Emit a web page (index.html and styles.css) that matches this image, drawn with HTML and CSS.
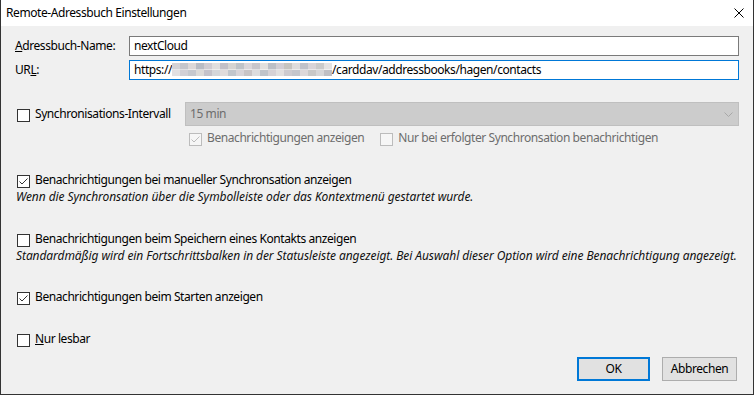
FILE: index.html
```html
<!DOCTYPE html>
<html lang="de">
<head>
<meta charset="utf-8">
<title>Remote-Adressbuch Einstellungen</title>
<link rel="stylesheet" href="styles.css">
</head>
<body>
<div class="window">
  <header class="titlebar">
    <span class="title">Remote-Adressbuch Einstellungen</span>
    <svg class="close" width="10" height="10" viewBox="0 0 10 10"><path d="M0.5 0.5 L9.5 9.5 M9.5 0.5 L0.5 9.5" stroke="#000" stroke-width="1" fill="none"/></svg>
  </header>
  <main class="content">
    <div class="fields">
      <label class="field-label"><u>A</u>dressbuch-Name:</label>
      <div class="input">nextCloud</div>
      <label class="field-label">UR<u>L</u>:</label>
      <div class="input focused">https://<span class="blur"></span>/carddav/addressbooks/hagen/contacts</div>
    </div>

    <div class="sync-row">
      <div class="check sync-check"><span class="box"></span><span class="text">Synchronisations-Intervall</span></div>
      <div class="select"><span>15 min</span><svg class="chev" width="9" height="5" viewBox="0 0 9 5"><polyline points="0.5,0.5 4.5,4.5 8.5,0.5" fill="none" stroke="#a8a8a8" stroke-width="1"/></svg></div>
    </div>

    <div class="sub-row">
      <div class="check disabled"><span class="box"><svg width="11" height="11" viewBox="0 0 11 11"><polyline points="1.5,5.5 4,8 9.5,2.5" fill="none" stroke="#bcbcbc" stroke-width="1"/></svg></span><span class="text">Benachrichtigungen anzeigen</span></div>
      <div class="check disabled"><span class="box"></span><span class="text">Nur bei erfolgter Synchronsation benachrichtigen</span></div>
    </div>

    <div class="check option opt-first"><span class="box"><svg width="11" height="11" viewBox="0 0 11 11"><polyline points="1.5,5.5 4,8 9.5,2.5" fill="none" stroke="#333" stroke-width="1"/></svg></span><span class="text">Benachrichtigungen bei manueller Synchronsation anzeigen</span></div>
    <p class="hint">Wenn die Synchronsation über die Symbolleiste oder das Kontextmenü gestartet wurde.</p>

    <div class="check option"><span class="box"></span><span class="text">Benachrichtigungen beim Speichern eines Kontakts anzeigen</span></div>
    <p class="hint">Standardmäßig wird ein Fortschrittsbalken in der Statusleiste angezeigt. Bei Auswahl dieser Option wird eine Benachrichtigung angezeigt.</p>

    <div class="check option opt-start"><span class="box"><svg width="11" height="11" viewBox="0 0 11 11"><polyline points="1.5,5.5 4,8 9.5,2.5" fill="none" stroke="#333" stroke-width="1"/></svg></span><span class="text">Benachrichtigungen beim Starten anzeigen</span></div>

    <div class="check option"><span class="box"></span><span class="text"><u>N</u>ur lesbar</span></div>

    <div class="buttons">
      <button class="btn btn-ok">OK</button>
      <button class="btn btn-cancel">Abbrechen</button>
    </div>
  </main>
</div>
</body>
</html>
```
FILE: styles.css
```css
html, body {
  margin: 0;
  padding: 0;
  background: #f0f0f0;
}

body {
  font-family: "Noto Sans", "Open Sans", sans-serif;
  font-size: 12px;
  line-height: 16px;
  letter-spacing: -0.42px;
  color: #000;
}

.window {
  width: 754px;
  height: 395px;
  box-sizing: border-box;
  border: 1px solid #333;
  border-top: none;
  background: #f0f0f0;
  display: flex;
  flex-direction: column;
}

.titlebar {
  height: 26px;
  background: #fff;
  display: flex;
  align-items: center;
  justify-content: space-between;
  padding: 0 9px 0 5px;
  flex: none;
}

.close {
  display: block;
}

.content {
  padding: 10px 14px 0 14px;
}

.fields {
  display: grid;
  grid-template-columns: 114px 1fr;
  row-gap: 4px;
  align-items: center;
}

.input {
  height: 20px;
  box-sizing: border-box;
  border: 1px solid #7a7a7a;
  background: #fff;
  padding: 0 4px;
  line-height: 18px;
  white-space: nowrap;
  overflow: hidden;
}

.input.focused {
  border-color: #0078d7;
}

.blur {
  display: inline-block;
  width: 160px;
  height: 13px;
  vertical-align: -2px;
  background:
    linear-gradient(90deg, #d4d2d6 0 8px, #c4c6cc 8px 16px, #dcd8d8 16px 24px, #b9bcc4 24px 32px, #d0ccd2 32px 40px, #e0dede 40px 48px, #c2c0c8 48px 56px, #d6d4d2 56px 64px, #bfc3c8 64px 72px, #dad6da 72px 80px, #c8c6cc 80px 88px, #e2e0de 88px 96px, #bcbfc6 96px 104px, #d2ced4 104px 112px, #c6c4c0 112px 120px, #dedcdc 120px 128px, #c0c2ca 128px 136px, #d8d4d8 136px 144px, #cacaca 144px 152px, #e4e2e2 152px 160px) top / 100% 50% no-repeat,
    linear-gradient(90deg, #e2e0e2 0 8px, #d2d0d6 8px 16px, #c6c8ce 16px 24px, #dcdad8 24px 32px, #c4c2ca 32px 40px, #d4d6da 40px 48px, #e0dcdc 48px 56px, #c2c6cc 56px 64px, #d8d4d8 64px 72px, #c8c4c6 72px 80px, #dcdcde 80px 88px, #c0c4ca 88px 96px, #d6d2d6 96px 104px, #e2e0e0 104px 112px, #cdcbd0 112px 120px, #c4c6cc 120px 128px, #dcd8da 128px 136px, #c8c8c8 136px 144px, #d6d6d8 144px 152px, #bfbfc4 152px 160px) bottom / 100% 50% no-repeat;
}

.sync-row {
  margin-top: 22px;
  height: 24px;
  display: flex;
  align-items: center;
}

.sync-check {
  width: 170px;
  flex: none;
}

.select {
  flex: 1;
  height: 24px;
  box-sizing: border-box;
  background: #cccccc;
  border: 1px solid #bfbfbf;
  color: #6d6d6d;
  display: flex;
  align-items: center;
  justify-content: space-between;
  padding: 0 5px 0 4px;
}

.chev {
  display: block;
}

.check {
  display: flex;
  align-items: flex-start;
  height: 16px;
  white-space: nowrap;
}

.box {
  width: 13px;
  height: 13px;
  box-sizing: border-box;
  border: 1px solid #333;
  background: #fff;
  margin: 3px 5px 0 2px;
  flex: none;
  display: flex;
  align-items: center;
  justify-content: center;
}

.box svg {
  display: block;
}

.check.disabled {
  color: #6d6d6d;
}

.check.disabled .box {
  border-color: #bcbcbc;
  background: #f6f6f6;
}

.sub-row {
  margin-top: 4px;
  margin-left: 172px;
  display: flex;
  gap: 14px;
}

.option {
  margin-top: 26px;
}

.opt-start {
  margin-top: 25px;
}

.hint {
  margin: 1px 0 0 1px;
  font-style: italic;
  letter-spacing: -0.08px;
  white-space: nowrap;
  color: #111;
}

.buttons {
  margin-top: 10px;
  margin-right: 2px;
  display: flex;
  justify-content: flex-end;
  gap: 12px;
}

.btn {
  height: 24px;
  box-sizing: border-box;
  background: #e1e1e1;
  border: 1px solid #adadad;
  font: inherit;
  letter-spacing: inherit;
  color: #000;
  padding: 0;
  margin: 0;
}

.btn-ok {
  width: 73px;
  border: 2px solid #0078d7;
}

.btn-cancel {
  width: 75px;
}
```
